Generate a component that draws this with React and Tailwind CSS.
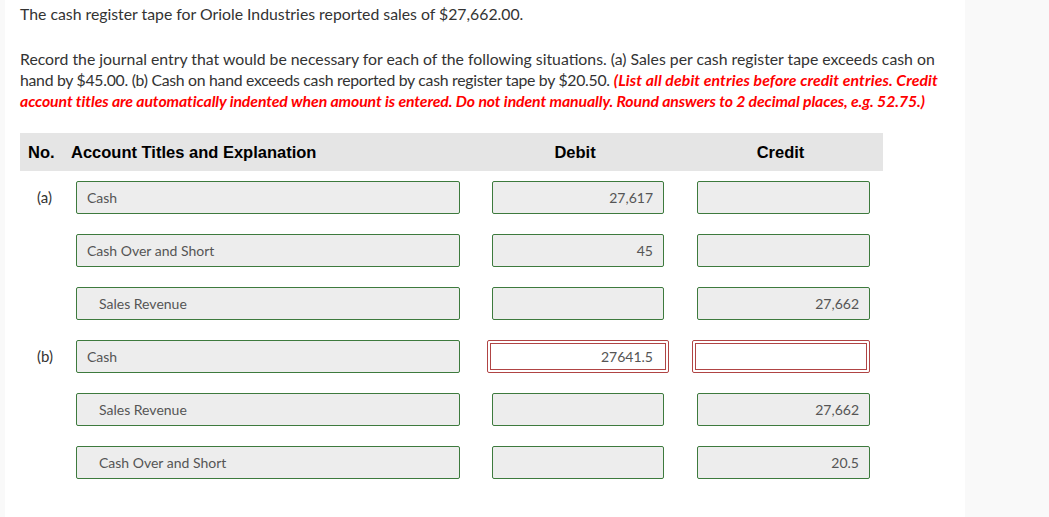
import React from "react";

const rows = [
  { no: "(a)", account: "Cash", debit: "27,617", credit: "" },
  { no: "", account: "Cash Over and Short", debit: "45", credit: "" },
  { no: "", account: "Sales Revenue", indent: true, debit: "", credit: "27,662" },
  { no: "(b)", account: "Cash", debit: "27641.5", credit: "", invalid: true },
  { no: "", account: "Sales Revenue", indent: true, debit: "", credit: "27,662" },
  { no: "", account: "Cash Over and Short", indent: true, debit: "", credit: "20.5" },
];

const boxClass =
  "block w-full h-full bg-[#ededed] border border-[#3d7a3d] rounded-[2px] text-[14px] text-[#555] outline-none";

const AmountBox = ({ value, invalid, width }) => {
  if (invalid) {
    return (
      <div className={`${width} h-[33px] border border-[#b04444] rounded-[2px] p-[2px] bg-white`}>
        <input
          readOnly
          defaultValue={value}
          className="block w-full h-full bg-white border border-[#b04444] text-[14px] text-[#555] text-right pr-[12px] outline-none"
        />
      </div>
    );
  }
  return (
    <div className={`${width} h-[33px]`}>
      <input readOnly defaultValue={value} className={`${boxClass} text-right pr-[10px]`} />
    </div>
  );
};

export default function App() {
  return (
    <div className="flex min-h-[517px] bg-[#f9f9f9] font-['Lato','Liberation_Sans',sans-serif]">
      <div className="ml-[5px] w-[960px] bg-white px-[15px] pt-[3px] text-[15.8px] leading-[21px] text-[#333]">
        <p>The cash register tape for Oriole Industries reported sales of $27,662.00.</p>
        <p className="mt-[24px]">
          Record the journal entry that would be necessary for each of the following situations. (a) Sales per
          cash register tape exceeds cash on
          <br />
          <span className="tracking-[-0.28px]">
            hand by $45.00. (b) Cash on hand exceeds cash reported by cash register tape by $20.50.
          </span>{" "}
          <span className="font-bold italic tracking-[0.1px] text-[#f00]">
            (List all debit entries before credit entries. Credit
          </span>
          <br />
          <span className="font-bold italic tracking-[-0.1px] text-[#f00]">
            account titles are automatically indented when amount is entered. Do not indent manually. Round
            answers to 2 decimal places, e.g. 52.75.)
          </span>
        </p>

        <div className="mt-[22px] flex h-[38px] w-[863px] items-center bg-[#e5e5e5] pl-[8px] font-['Liberation_Sans',sans-serif] text-[16.5px] font-bold text-black">
          <span className="w-[43px]">No.</span>
          <span className="w-[421px]">Account Titles and Explanation</span>
          <span className="w-[172px] pr-[6px] text-center">Debit</span>
          <span className="w-[33px]" />
          <span className="w-[173px] pr-[6px] text-center">Credit</span>
        </div>

        <div className="mt-[10px] flex flex-col gap-[20px] text-[15px]">
          {rows.map((row, i) => (
            <div key={i} className="flex h-[33px] items-center">
              <span className="w-[56px] pl-[17px]">{row.no}</span>
              <div className="h-[33px] w-[384px]">
                <input
                  readOnly
                  defaultValue={row.account}
                  className={`${boxClass} ${row.indent ? "pl-[22px]" : "pl-[10px]"}`}
                />
              </div>
              <div className={row.invalid ? "ml-[27px]" : "ml-[32px]"}>
                <AmountBox value={row.debit} invalid={row.invalid} width={row.invalid ? "w-[182px]" : "w-[172px]"} />
              </div>
              <div className={row.invalid ? "ml-[23px]" : "ml-[33px]"}>
                <AmountBox value={row.credit} invalid={row.invalid} width={row.invalid ? "w-[178px]" : "w-[173px]"} />
              </div>
            </div>
          ))}
        </div>
      </div>
    </div>
  );
}
